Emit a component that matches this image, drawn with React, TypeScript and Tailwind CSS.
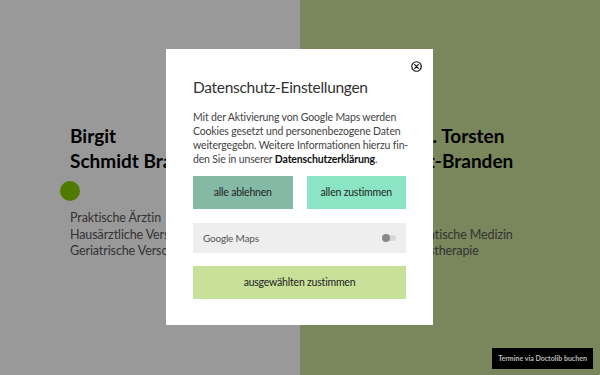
import React from "react";

export default function App() {
  const font = { fontFamily: "Lato, 'Noto Sans', sans-serif" };
  return (
    <div className="relative w-[600px] h-[375px] overflow-hidden" style={font}>
      <div className="grid grid-cols-2 h-full">
        <div className="bg-[#999999] pl-[70px] pt-[123px]">
          <div className="text-[19px] leading-[25px] font-bold text-black whitespace-nowrap">
            <div>Birgit</div>
            <div>Schmidt Brandenburg</div>
          </div>
          <div className="w-[20px] h-[20px] rounded-full bg-[#4e7a00] ml-[-10px] mt-[8px]" />
          <div className="mt-[9px] text-[12.5px] leading-[16.5px] text-[#333333] whitespace-nowrap tracking-[-0.1px]">
            <div>Praktische Ärztin</div>
            <div>Hausärztliche Versorgung</div>
            <div>Geriatrische Versorgung</div>
          </div>
        </div>
        <div className="bg-[#7a865b] pl-[66px] pt-[123px]">
          <div className="text-[19px] leading-[25px] font-bold text-black whitespace-nowrap">
            <div>Dr. med. Torsten</div>
            <div>Schmidt-Branden</div>
          </div>
          <div className="w-[20px] h-[20px] mt-[8px]" />
          <div className="mt-[9px] pl-[2px] text-[12.5px] leading-[16.5px] text-[#333333] whitespace-nowrap tracking-[-0.1px]">
            <div>Arzt</div>
            <div>Psychosomatische Medizin</div>
            <div className="ml-[9px]">Verhaltenstherapie</div>
          </div>
        </div>
      </div>

      <div className="absolute left-[166px] top-[49px] w-[267px] h-[276px] bg-white px-[27px] pt-[27px]">
        <button className="absolute right-[11px] top-[12px] w-[11px] h-[11px]">
          <svg viewBox="0 0 12 12" width="11" height="11">
            <circle cx="6" cy="6" r="5.2" fill="none" stroke="#111" strokeWidth="1.3" />
            <path d="M4 4 L8 8 M8 4 L4 8" stroke="#111" strokeWidth="1.4" strokeLinecap="round" />
          </svg>
        </button>
        <div className="text-[15.5px] leading-[22px] tracking-[-0.3px] text-[#333333] whitespace-nowrap">Datenschutz-Einstellungen</div>
        <div className="mt-[12px] text-[10.5px] leading-[14px] tracking-[-0.15px] text-[#444444] whitespace-nowrap">
          <div>Mit der Aktivierung von Google Maps werden</div>
          <div>Cookies gesetzt und personenbezogene Daten</div>
          <div>weitergegebn. Weitere Informationen hierzu fin-</div>
          <div>den Sie in unserer <b className="text-[#111]">Datenschutzerklärung</b>.</div>
        </div>
        <div className="mt-[10px] flex gap-[14px]">
          <div className="w-[100px] h-[33px] bg-[#84b9a6] flex items-center justify-center text-[10.5px] tracking-[-0.2px] text-[#222]">alle ablehnen</div>
          <div className="w-[100px] h-[33px] bg-[#8be5c5] flex items-center justify-center text-[10.5px] tracking-[-0.2px] text-[#222]">allen zustimmen</div>
        </div>
        <div className="mt-[14px] h-[30px] bg-[#eeeeee] flex items-center justify-between pl-[10px] pr-[10px]">
          <span className="text-[10px] tracking-[-0.2px] text-[#555]">Google Maps</span>
          <span className="relative w-[14px] h-[6px] rounded-full bg-[#d6d6d6]">
            <span className="absolute left-0 top-[-1px] w-[8px] h-[8px] rounded-full bg-[#888]" />
          </span>
        </div>
        <div className="mt-[13px] h-[33px] bg-[#c8e199] flex items-center justify-center text-[10.5px] tracking-[-0.2px] text-[#222]">ausgewählten zustimmen</div>
      </div>

      <div className="absolute left-[492px] top-[348px] w-[101px] h-[21px] bg-black flex items-center justify-center text-[7px] font-bold text-[#bbbbbb] whitespace-nowrap">
        Termine via Doctolib buchen
      </div>
    </div>
  );
}
